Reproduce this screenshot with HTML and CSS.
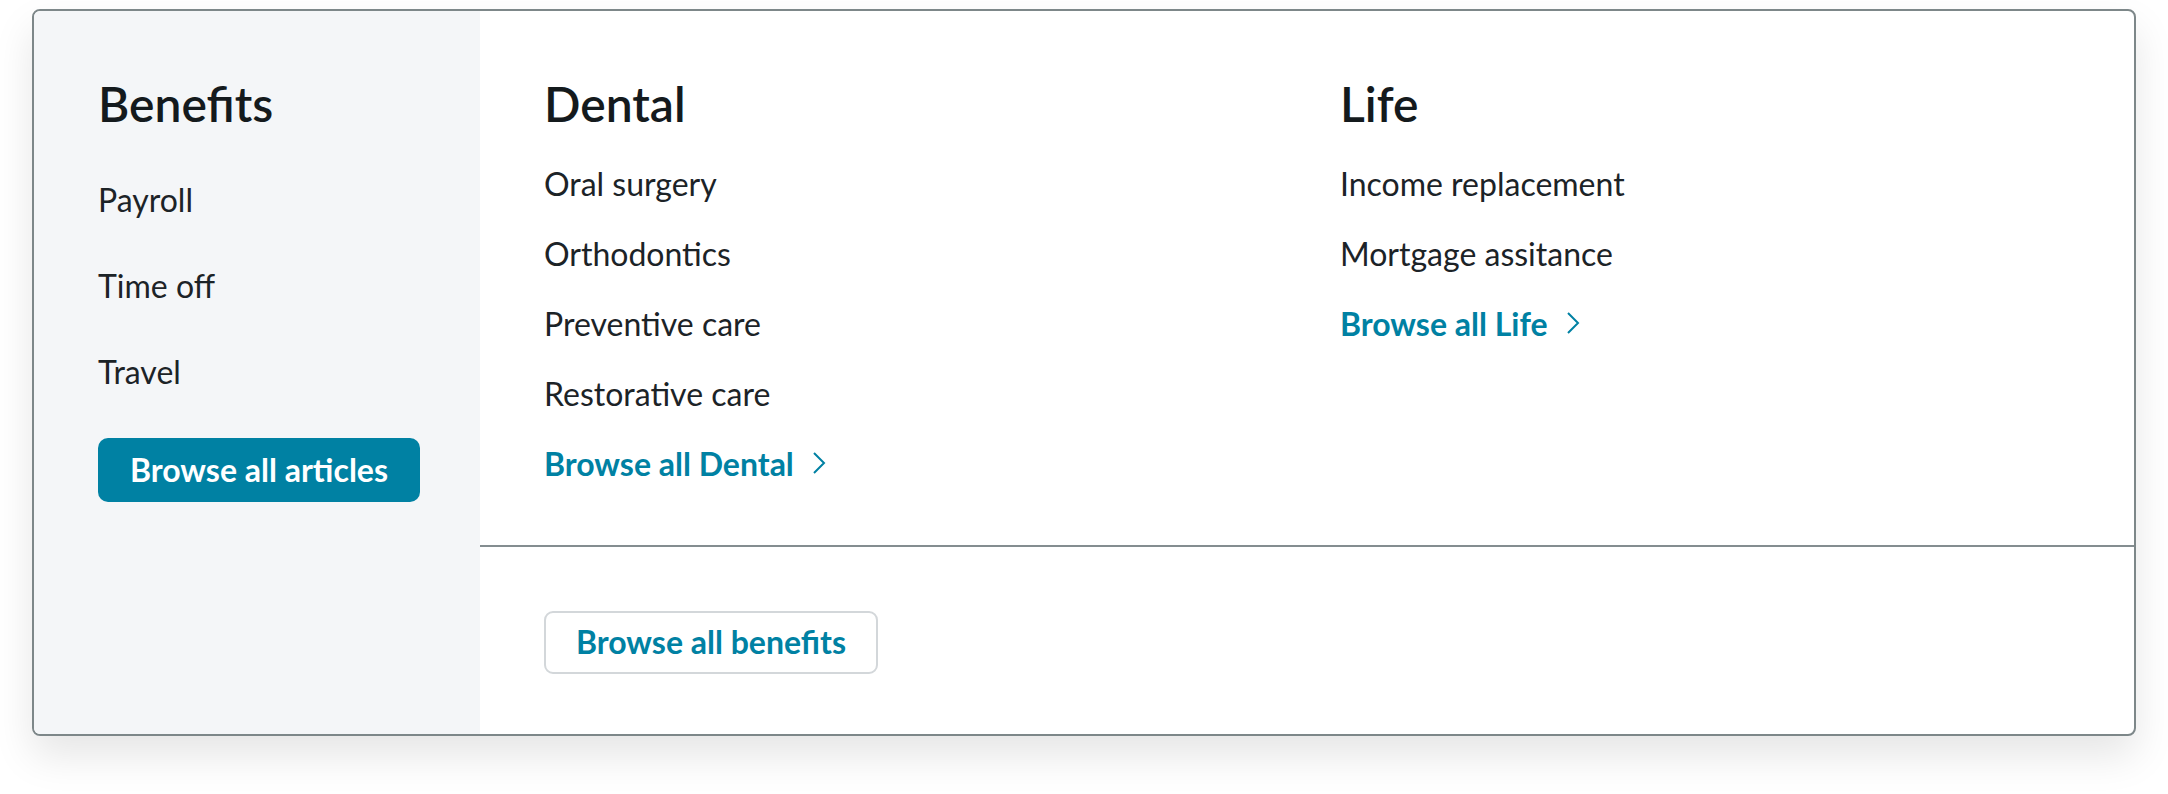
FILE: index.html
```html
<!DOCTYPE html>
<html lang="en">
<head>
    <meta charset="UTF-8">
    <meta name="viewport" content="width=device-width, initial-scale=1.0">
    <title>Benefits menu</title>
    <link rel="stylesheet" href="styles.css">
</head>
<body>
    <div class="mega-menu">
        <!-- Sidebar -->
        <aside class="sidebar">
            <h2 class="sidebar-title">Benefits</h2>
            <ul class="sidebar-list">
                <li><a href="#">Payroll</a></li>
                <li><a href="#">Time off</a></li>
                <li><a href="#">Travel</a></li>
            </ul>
            <a href="#" class="btn btn-primary">Browse all articles</a>
        </aside>

        <!-- Categories -->
        <div class="panel">
            <div class="panel-columns">
                <div class="column">
                    <h3 class="column-title">Dental</h3>
                    <a href="#" class="column-item">Oral surgery</a>
                    <a href="#" class="column-item">Orthodontics</a>
                    <a href="#" class="column-item">Preventive care</a>
                    <a href="#" class="column-item">Restorative care</a>
                    <a href="#" class="browse-link">Browse all Dental
                        <svg class="chevron" viewBox="0 0 16 24" width="16" height="24"><path d="M3 2 L13 12 L3 22"/></svg>
                    </a>
                </div>
                <div class="column">
                    <h3 class="column-title">Life</h3>
                    <a href="#" class="column-item">Income replacement</a>
                    <a href="#" class="column-item">Mortgage assitance</a>
                    <a href="#" class="browse-link">Browse all Life
                        <svg class="chevron" viewBox="0 0 16 24" width="16" height="24"><path d="M3 2 L13 12 L3 22"/></svg>
                    </a>
                </div>
            </div>
            <div class="panel-footer">
                <a href="#" class="btn btn-outline">Browse all benefits</a>
            </div>
        </div>
    </div>
</body>
</html>
```

FILE: styles.css
```css
* {
    margin: 0;
    padding: 0;
    box-sizing: border-box;
}

body {
    font-family: Lato, 'Open Sans', sans-serif;
    background-color: #ffffff;
    color: #1c2327;
    min-height: 100vh;
    padding: 9px 0 0 32px;
}

a {
    text-decoration: none;
    color: inherit;
}

ul {
    list-style: none;
}

.mega-menu {
    width: 2104px;
    display: flex;
    border: 2px solid #7d8789;
    border-radius: 8px;
    background-color: #ffffff;
    box-shadow: 0 20px 40px rgba(0, 0, 0, 0.1);
    overflow: hidden;
}

.sidebar {
    width: 446px;
    flex-shrink: 0;
    background-color: #f4f6f8;
    padding: 64px 0 0 64px;
    display: flex;
    flex-direction: column;
    align-items: flex-start;
}

.sidebar-title,
.column-title {
    font-size: 48px;
    line-height: 58px;
    font-weight: 600;
    color: #141a1d;
}

.sidebar-list {
    display: flex;
    flex-direction: column;
    gap: 48px;
    margin: 48px 0 47px;
}

.sidebar-list a,
.column-item {
    font-size: 32px;
    line-height: 38px;
}

.btn {
    display: inline-block;
    font-size: 32px;
    line-height: 38px;
    font-weight: 700;
    border-radius: 10px;
}

.btn-primary {
    background-color: #0081a3;
    color: #ffffff;
    padding: 13px 32px;
}

.btn-outline {
    color: #0081a3;
    border: 2px solid #d3d7da;
    border-radius: 9px;
    padding: 10px 30px 11px;
}

.panel {
    flex: 1;
    display: flex;
    flex-direction: column;
}

.panel-columns {
    display: grid;
    grid-template-columns: 796px 1fr;
    padding: 64px 64px 62px;
    border-bottom: 2px solid #848d90;
}

.column {
    display: flex;
    flex-direction: column;
    align-items: flex-start;
    gap: 32px;
}

.browse-link {
    display: flex;
    align-items: center;
    gap: 17px;
    font-size: 32px;
    line-height: 38px;
    font-weight: 700;
    color: #0081a3;
}

.chevron {
    fill: none;
    stroke: #0081a3;
    stroke-width: 2;
    margin-top: -3px;
}

.panel-footer {
    padding: 64px 64px 60px;
}
```
